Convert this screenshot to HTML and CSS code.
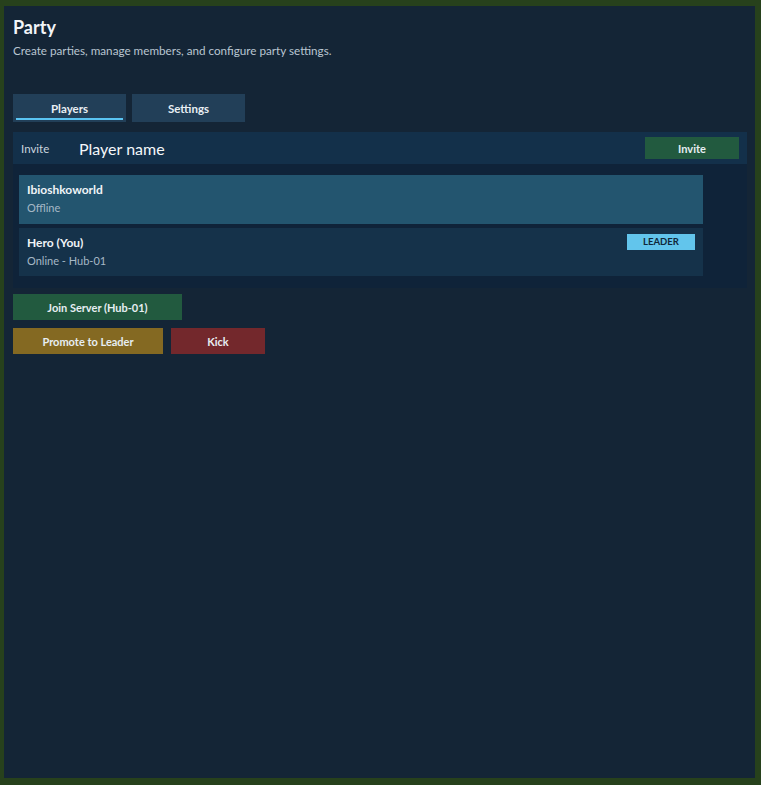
FILE: index.html
```html
<!DOCTYPE html>
<html lang="en">
<head>
    <meta charset="UTF-8">
    <meta name="viewport" content="width=device-width, initial-scale=1.0">
    <title>Party</title>
    <link rel="stylesheet" href="styles.css">
</head>
<body>
    <div class="panel">
        <h1 class="title">Party</h1>
        <p class="subtitle">Create parties, manage members, and configure party settings.</p>

        <div class="tabs">
            <button class="tab active">Players</button>
            <button class="tab">Settings</button>
        </div>

        <div class="invite-row">
            <span class="invite-label">Invite</span>
            <span class="invite-input">Player name</span>
            <button class="btn btn-green invite-btn">Invite</button>
        </div>

        <div class="member-list">
            <div class="member selected">
                <div class="member-info">
                    <div class="member-name">Ibioshkoworld</div>
                    <div class="member-status">Offline</div>
                </div>
            </div>
            <div class="member">
                <div class="member-info">
                    <div class="member-name">Hero (You)</div>
                    <div class="member-status">Online - Hub-01</div>
                </div>
                <span class="badge">LEADER</span>
            </div>
        </div>

        <div class="actions">
            <button class="btn btn-green join-btn">Join Server (Hub-01)</button>
            <div class="action-row">
                <button class="btn btn-gold promote-btn">Promote to Leader</button>
                <button class="btn btn-red kick-btn">Kick</button>
            </div>
        </div>
    </div>
</body>
</html>
```

FILE: styles.css
```css
* {
    box-sizing: border-box;
}

body {
    margin: 0;
    padding: 6px 6px 7px 4px;
    height: 785px;
    background: #27411c;
    font-family: Lato, "Noto Sans", sans-serif;
    color: #e8eef3;
}

.panel {
    height: 100%;
    background: #142536;
    padding: 11px 8px 0 9px;
}

.title {
    margin: 0;
    font-size: 18px;
    font-weight: 700;
    line-height: 20px;
    color: #f2f5f8;
}

.subtitle {
    margin: 6px 0 0;
    font-size: 11.7px;
    line-height: 14px;
    color: #b9c6d2;
}

.tabs {
    display: flex;
    gap: 6px;
    margin-top: 37px;
}

.tab {
    position: relative;
    width: 113px;
    height: 28px;
    border: none;
    background: #223f58;
    color: #e9eff4;
    font-family: inherit;
    font-size: 11.5px;
    font-weight: 700;
    padding: 0;
}

.tab.active::after {
    content: "";
    position: absolute;
    left: 3px;
    right: 3px;
    bottom: 2px;
    height: 2px;
    background: #5ac4f2;
}

.invite-row {
    display: flex;
    align-items: center;
    height: 32px;
    margin-top: 10px;
    padding: 0 8px;
    background: #13304a;
}

.invite-label {
    width: 58px;
    font-size: 11.5px;
    color: #c9d4de;
}

.invite-input {
    flex: 1;
    font-size: 16px;
    color: #f4f7fa;
}

.btn {
    border: none;
    font-family: inherit;
    font-size: 11px;
    font-weight: 700;
    color: #e7eef2;
    padding: 0;
}

.btn-green {
    background: #225a3f;
}

.btn-gold {
    background: #846922;
}

.btn-red {
    background: #73282c;
}

.invite-btn {
    width: 94px;
    height: 22px;
}

.member-list {
    display: flex;
    flex-direction: column;
    gap: 4px;
    padding: 11px 44px 12px 6px;
    background: #0f2339;
}

.member {
    display: flex;
    align-items: flex-start;
    justify-content: space-between;
    height: 48px;
    padding: 8px 8px 0;
    background: #15324a;
}

.member.selected {
    height: 49px;
    background: #23556f;
}

.member-name {
    font-size: 12px;
    font-weight: 700;
    line-height: 14px;
    color: #f0f4f7;
}

.member-status {
    margin-top: 4px;
    font-size: 11px;
    line-height: 14px;
    color: #a5b8c6;
}

.badge {
    width: 68px;
    height: 16px;
    margin-top: -2px;
    background: #62c5ec;
    color: #10283a;
    font-size: 9.5px;
    font-weight: 700;
    line-height: 16px;
    text-align: center;
}

.actions {
    display: flex;
    flex-direction: column;
    gap: 8px;
    margin-top: 6px;
}

.join-btn {
    width: 169px;
    height: 26px;
}

.action-row {
    display: flex;
    gap: 8px;
}

.promote-btn {
    width: 150px;
    height: 26px;
}

.kick-btn {
    width: 94px;
    height: 26px;
}
```
